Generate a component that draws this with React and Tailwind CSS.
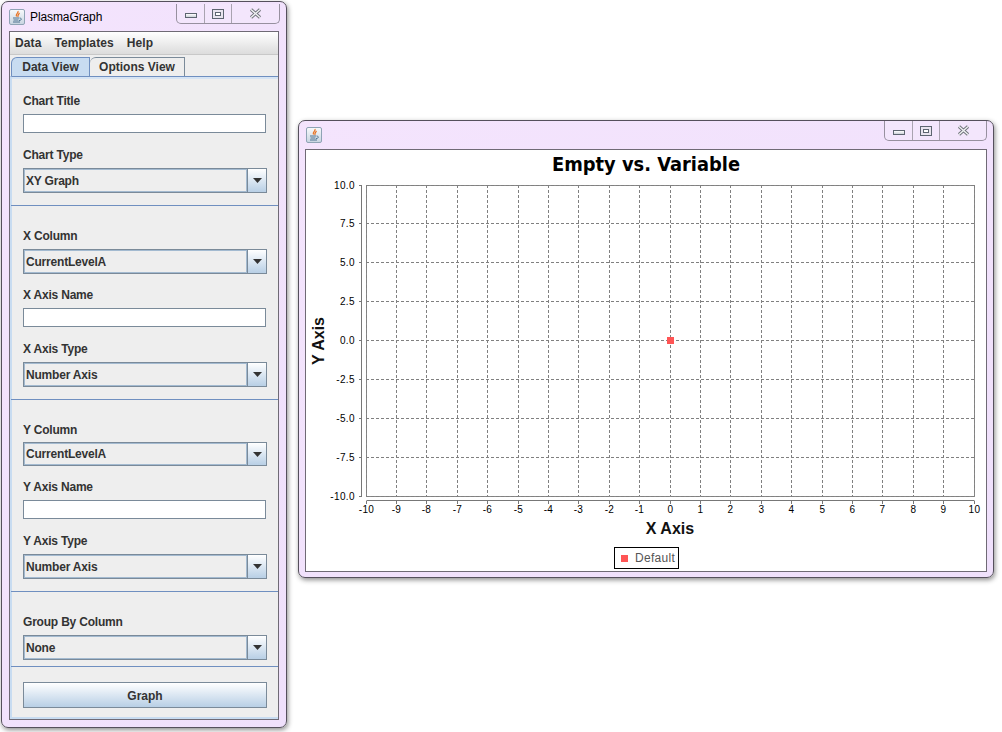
const SANS = { fontFamily: '"Liberation Sans", Arial, sans-serif' };

function JavaIcon() {
  return (
    <div className="w-[16px] h-[16px] rounded-[2px] border border-[#8fa3b5] bg-gradient-to-b from-[#f7f9fb] to-[#c9d6e2] flex items-center justify-center">
      <svg width="14" height="14" viewBox="0 0 14 14" fill="none">
        <path d="M8 1 C9 3 5 4 6.5 6.5 M9.5 3 C8 4.5 7.5 5 8 7" stroke="#e8701f" strokeWidth="1.2" />
        <path d="M3 8 H9 M3.5 10 H8.5 M3 12 H10 M9.5 8 C12 8 12 10.5 9 10.5" stroke="#4f7391" strokeWidth="1" />
      </svg>
    </div>
  );
}

function WindowButtons({ closeWidth }) {
  return (
    <div className="flex h-[20px] border border-t-0 border-[#97909f] rounded-b-[5px] bg-[#f3e6fc]">
      <div className="w-[28px] flex items-center justify-center border-r border-[#a9a3b0]">
        <div className="w-[12px] h-[5px] mt-[3px] border border-[#5d6570] bg-gradient-to-b from-white to-[#ccd2d8]" />
      </div>
      <div className="w-[27px] flex items-center justify-center border-r border-[#a9a3b0]">
        <div className="w-[12px] h-[10px] border border-[#5d6570] bg-[#e8e4ee] flex items-center justify-center">
          <div className="w-[6px] h-[4px] border border-[#5d6570] bg-white" />
        </div>
      </div>
      <div className={closeWidth + " flex items-center justify-center"}>
        <svg width="13" height="11" viewBox="0 0 13 11">
          <path d="M2 1.5 L11 9.5 M11 1.5 L2 9.5" stroke="#6d7178" strokeWidth="3.2" />
          <path d="M2 1.5 L11 9.5 M11 1.5 L2 9.5" stroke="#f1f2f4" strokeWidth="1.4" />
        </svg>
      </div>
    </div>
  );
}

function Label({ children, className = '' }) {
  return <div className={"h-[14px] leading-[14px] text-[12px] font-bold tracking-[-0.2px] text-[#333] " + className}>{children}</div>;
}

function TextInput({ className = '' }) {
  return <div className={"w-[243px] h-[19px] bg-white border border-[#7a8a99] " + className} />;
}

function Combo({ value, height = 'h-[25px]', className = '' }) {
  return (
    <div className={"w-[244px] flex border border-[#7a8a99] bg-[#eeeeee] " + height + " " + className}>
      <div className="flex-1 flex items-center pl-[1px] border border-[#a3bad0] text-[12px] font-bold tracking-[-0.2px] text-[#333]">{value}</div>
      <div className="w-[19px] flex items-center justify-center border-l border-[#7a8a99] bg-gradient-to-b from-white to-[#b8cfe5]">
        <svg width="9" height="5" viewBox="0 0 9 5"><path d="M0 0 H9 L4.5 5 Z" fill="#333" /></svg>
      </div>
    </div>
  );
}

function Separator({ className = '' }) {
  return <div className={"h-px -ml-[12px] -mr-[11px] bg-[#6f8fc0] " + className} />;
}

function ControlWindow() {
  return (
    <div
      className="absolute left-[1px] top-[1px] w-[286px] h-[727px] rounded-[7px] border border-[#55505c] bg-gradient-to-br from-[#f4e4fd] to-[#efe0fb] shadow-[1px_2px_5px_rgba(0,0,0,0.45)] text-[#333]"
      style={SANS}
    >
      <div className="flex h-[29px] pl-[7px] pr-[6px]">
        <div className="flex items-center gap-[5px] h-[29px]">
          <JavaIcon />
          <span className="text-[12px] text-black tracking-[-0.1px]">PlasmaGraph</span>
        </div>
        <div className="ml-auto mt-[2px]">
          <WindowButtons closeWidth="w-[47px]" />
        </div>
      </div>
      <div className="mx-[7px] h-[689px] bg-[#eeeeee] border border-[#6f6a75] flex flex-col">
        <div className="h-[23px] flex items-center gap-[13px] pl-[5px] text-[12px] font-bold tracking-[0.1px] text-[#333] bg-gradient-to-b from-white to-[#dcdcdc] border-b border-[#c8c8c8]">
          <span>Data</span>
          <span>Templates</span>
          <span>Help</span>
        </div>
        <div className="flex h-[21px] pl-[1px] pt-[2px] text-[12px] font-bold">
          <div className="w-[79px] flex items-center justify-center bg-[#c8dcf1] border border-b-0 border-[#6f8fc0] rounded-tl-[6px]">Data View</div>
          <div className="w-[95px] flex items-center justify-center bg-[#eeeeee] border border-b-0 border-l-0 border-[#7a8a99] rounded-tl-[6px]">Options View</div>
        </div>
        <div className="flex-1 flex flex-col border-t border-[#6f8fc0] border-l-2 border-l-[#c8dcf1] border-b-2 border-b-[#c8dcf1] px-[11px] relative">
          <div className="h-[2px] -ml-[11px] -mr-[11px] bg-[#d6e4f4]" />
          <Label className="mt-[15px]">Chart Title</Label>
          <TextInput className="mt-[6px]" />
          <Label className="mt-[15px]">Chart Type</Label>
          <Combo value="XY Graph" className="mt-[6px]" />
          <Separator className="mt-[12px]" />
          <Label className="mt-[23px]">X Column</Label>
          <Combo value="CurrentLevelA" className="mt-[6px]" />
          <Label className="mt-[14px]">X Axis Name</Label>
          <TextInput className="mt-[6px]" />
          <Label className="mt-[15px]">X Axis Type</Label>
          <Combo value="Number Axis" className="mt-[6px]" />
          <Separator className="mt-[12px]" />
          <Label className="mt-[23px]">Y Column</Label>
          <Combo value="CurrentLevelA" height="h-[24px]" className="mt-[5px]" />
          <Label className="mt-[14px]">Y Axis Name</Label>
          <TextInput className="mt-[6px]" />
          <Label className="mt-[15px]">Y Axis Type</Label>
          <Combo value="Number Axis" className="mt-[6px]" />
          <Separator className="mt-[12px]" />
          <Label className="mt-[23px]">Group By Column</Label>
          <Combo value="None" className="mt-[6px]" />
          <Separator className="mt-[6px]" />
          <div className="mt-[15px] w-[244px] h-[26px] pt-[1px] flex items-center justify-center border border-[#7a8a99] bg-gradient-to-b from-white to-[#b8cfe5] text-[12px] font-bold">Graph</div>
        </div>
      </div>
    </div>
  );
}

const PLOT = { left: 60, right: 668, top: 35, bottom: 346 };

function Chart() {
  const xs = Array.from({ length: 21 }, (_, i) => i - 10);
  const ys = Array.from({ length: 9 }, (_, i) => 10 - i * 2.5);
  const xPos = (v) => Math.floor(PLOT.left + ((v + 10) / 20) * (PLOT.right - PLOT.left)) + 0.5;
  const yPos = (v) => Math.floor(PLOT.top + ((10 - v) / 20) * (PLOT.bottom - PLOT.top)) + 0.5;
  return (
    <svg width="680" height="421" viewBox="0 0 680 421" style={SANS} className="block">
      <text x="340" y="21" textAnchor="middle" fontSize="20" fontWeight="700" fill="#000" style={{ fontFamily: '"DejaVu Sans", sans-serif' }} textLength="188" lengthAdjust="spacingAndGlyphs">Empty vs. Variable</text>
      <rect x={PLOT.left + 0.5} y={PLOT.top + 0.5} width={PLOT.right - PLOT.left} height={PLOT.bottom - PLOT.top} fill="none" stroke="#888" />
      {xs.map((v) => (
        <line key={v} x1={xPos(v)} x2={xPos(v)} y1={PLOT.top} y2={PLOT.bottom} stroke="#808080" strokeDasharray="3 2" />
      ))}
      {ys.map((v) => (
        <line key={v} x1={PLOT.left} x2={PLOT.right} y1={yPos(v)} y2={yPos(v)} stroke="#808080" strokeDasharray="3 2" />
      ))}
      <path d={`M${PLOT.left - 4.5} ${PLOT.top + 0.5} V${PLOT.bottom + 0.5}`} stroke="#777" fill="none" />
      <path d={`M${PLOT.left + 0.5} ${PLOT.bottom + 4.5} H${PLOT.right + 0.5}`} stroke="#777" fill="none" />
      {ys.map((v) => (
        <g key={v}>
          <line x1={PLOT.left - 7} x2={PLOT.left - 4} y1={yPos(v)} y2={yPos(v)} stroke="#777" />
          <text x={PLOT.left - 11} y={yPos(v) + 3.5} textAnchor="end" fontSize="10" letterSpacing="0.4" fill="#000">{v.toFixed(1)}</text>
        </g>
      ))}
      {xs.map((v) => (
        <g key={v}>
          <line x1={xPos(v)} x2={xPos(v)} y1={PLOT.bottom + 5} y2={PLOT.bottom + 8} stroke="#777" />
          <text x={xPos(v)} y={PLOT.bottom + 17} textAnchor="middle" fontSize="10" letterSpacing="0.4" fill="#000">{v}</text>
        </g>
      ))}
      <text x="364" y="384" textAnchor="middle" fontSize="16" fontWeight="700" fill="#111">X Axis</text>
      <text transform="translate(18 191) rotate(-90)" textAnchor="middle" fontSize="16" fontWeight="700" fill="#111">Y Axis</text>
      <rect x={xPos(0) - 3.5} y={yPos(0) - 3.5} width="7" height="7" fill="#ff5555" />
    </svg>
  );
}

function ChartWindow() {
  return (
    <div
      className="absolute left-[298px] top-[120px] w-[696px] h-[458px] rounded-[7px] border border-[#55505c] bg-gradient-to-br from-[#f4e4fd] to-[#efe0fb] shadow-[1px_2px_5px_rgba(0,0,0,0.45)]"
      style={SANS}
    >
      <div className="flex h-[28px] pl-[7px] pr-[6px]">
        <div className="flex items-center h-[28px]">
          <JavaIcon />
        </div>
        <div className="ml-auto">
          <WindowButtons closeWidth="w-[46px]" />
        </div>
      </div>
      <div className="relative mx-[6px] w-[682px] h-[423px] bg-white border border-[#6f6a75]">
        <Chart />
        <div className="absolute left-[308px] top-[397px] w-[65px] h-[22px] flex items-center border border-black bg-white pl-[6px] gap-[7px] text-[12px] tracking-[0.3px] text-[#555]">
          <div className="w-[7px] h-[7px] bg-[#ff5555]" />
          <span>Default</span>
        </div>
      </div>
    </div>
  );
}

export default function App() {
  return (
    <div className="relative w-[1002px] h-[732px] bg-white overflow-hidden">
      <ControlWindow />
      <ChartWindow />
    </div>
  );
}
